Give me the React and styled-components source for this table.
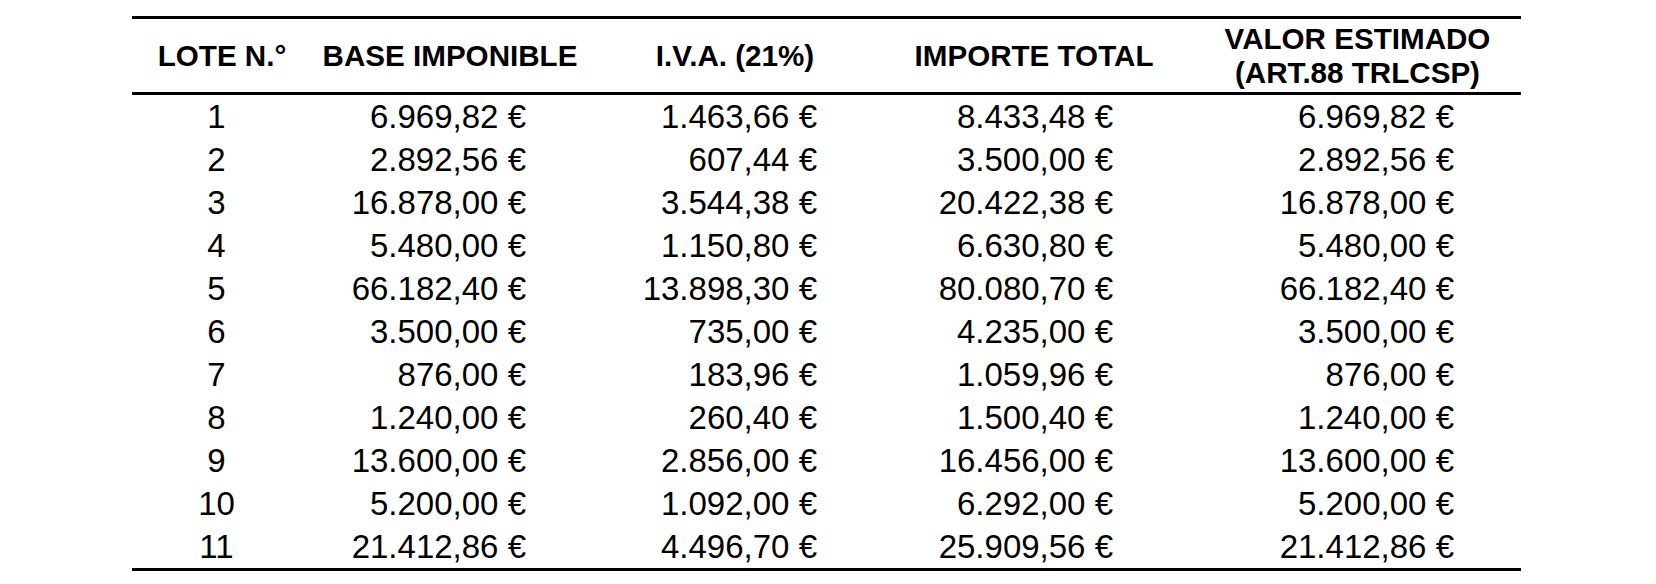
import React from "react";
import styled, { createGlobalStyle } from "styled-components";

const GlobalStyle = createGlobalStyle`
  html, body {
    margin: 0;
    padding: 0;
    background: #ffffff;
  }
  body {
    font-family: "Liberation Sans", Arial, Helvetica, sans-serif;
    color: #000000;
  }
`;

const Page = styled.div`
  width: 1656px;
  height: 584px;
  padding: 16px 0 0 132px;
  box-sizing: border-box;
`;

const Table = styled.div`
  width: 1389px;
  display: grid;
  grid-template-columns: 180px 276px 294px 304px 335px;
  border-top: 3px solid #000;
  border-bottom: 3px solid #000;
`;

const HeadCell = styled.div`
  height: 73px;
  display: flex;
  align-items: center;
  justify-content: center;
  text-align: center;
  font-weight: 700;
  font-size: 29.6px;
  line-height: 34px;
  padding-left: ${(props) => props.$pl || 0}px;
  border-bottom: 3px solid #000;
`;

const Cell = styled.div`
  height: 43px;
  line-height: 43px;
  font-size: 33px;
  white-space: nowrap;
  text-align: ${(props) => (props.$center ? "center" : "right")};
  padding-right: ${(props) => props.$pr || 0}px;
`;

const headers = [
  "LOTE N.°",
  "BASE IMPONIBLE",
  "I.V.A. (21%)",
  "IMPORTE TOTAL",
  <>
    VALOR ESTIMADO
    <br />
    (ART.88 TRLCSP)
  </>,
];

const rows = [
  ["1", "6.969,82", "1.463,66", "8.433,48", "6.969,82"],
  ["2", "2.892,56", "607,44", "3.500,00", "2.892,56"],
  ["3", "16.878,00", "3.544,38", "20.422,38", "16.878,00"],
  ["4", "5.480,00", "1.150,80", "6.630,80", "5.480,00"],
  ["5", "66.182,40", "13.898,30", "80.080,70", "66.182,40"],
  ["6", "3.500,00", "735,00", "4.235,00", "3.500,00"],
  ["7", "876,00", "183,96", "1.059,96", "876,00"],
  ["8", "1.240,00", "260,40", "1.500,40", "1.240,00"],
  ["9", "13.600,00", "2.856,00", "16.456,00", "13.600,00"],
  ["10", "5.200,00", "1.092,00", "6.292,00", "5.200,00"],
  ["11", "21.412,86", "4.496,70", "25.909,56", "21.412,86"],
];

// padding on the right of each column's figures
const rightPad = [11, 62, 65, 73, 67];

const App = () => {
  return (
    <Page>
      <GlobalStyle />
      <Table>
        {headers.map((h, i) => (
          <HeadCell key={"h" + i} $pl={i === 4 ? 8 : 0}>
            {h}
          </HeadCell>
        ))}
        {rows.map((row) =>
          row.map((value, i) =>
            i === 0 ? (
              <Cell key={row[0] + "-" + i} $center $pr={rightPad[0]}>
                {value}
              </Cell>
            ) : (
              <Cell key={row[0] + "-" + i} $pr={rightPad[i]}>
                {value} €
              </Cell>
            )
          )
        )}
      </Table>
    </Page>
  );
};

export default App;
